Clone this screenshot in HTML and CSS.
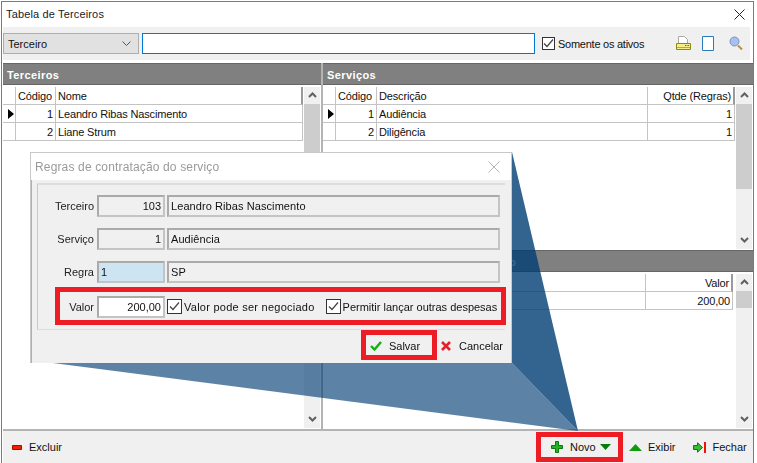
FILE: index.html
```html
<!DOCTYPE html>
<html lang="en">
<head>
    <meta charset="UTF-8">
    <title>Tabela de Terceiros</title>
    <link rel="stylesheet" href="styles.css">
</head>
<body>
    <div class="window">
        <div class="titlebar">
            <span>Tabela de Terceiros</span>
            <svg class="close" width="11" height="11" viewBox="0 0 11 11"><path d="M.5.5l10 10M10.500.5l-10 10" stroke="#222" fill="none"/></svg>
        </div>
        <div class="toolbar">
            <div class="select">
                <span>Terceiro</span>
                <svg width="9" height="5" viewBox="0 0 9 5"><path d="M.5.5l4 4 4-4" stroke="#555" fill="none"/></svg>
            </div>
            <div class="search"></div>
            <label class="check toolbar-check"><span class="box"><svg width="11" height="9" viewBox="0 0 11 9"><path d="M1 4.500l3 3 6-7" stroke="#444" stroke-width="1.200" fill="none"/></svg></span>Somente os ativos</label>
            <svg class="tool-print" width="15" height="15" viewBox="0 0 15 15"><path d="M2.500.5h6l3 3v5h-9z" fill="#fff" stroke="#a9a9a0"/><path d="M.5 7.500h14v6H.5z" fill="#f5ec8a" stroke="#8a8a10"/><path d="M1 11.500h13" stroke="#b0b030"/><path d="M9 9.500h1.500M11.500 9.500H13" stroke="#d33"/></svg>
            <svg class="tool-doc" width="12" height="15" viewBox="0 0 12 15"><path d="M.5.5h11v14H.5z" fill="#fff" stroke="#2b7bb9"/></svg>
            <svg class="tool-find" width="14" height="15" viewBox="0 0 14 15"><circle cx="5.500" cy="5.500" r="4.500" fill="#a9bff0" stroke="#7d8fc4"/><path d="M9 9.500l4 4" stroke="#b8923a" stroke-width="2"/></svg>
        </div>

        <div class="panels">
            <section class="panel panel-left">
                <h2 class="panel-head">Terceiros</h2>
                <div class="grid-wrap grow">
                    <div class="grid">
                        <div class="row row-head cols-a">
                            <div class="cell"></div><div class="cell">Código</div><div class="cell head-last">Nome</div>
                        </div>
                        <div class="row cols-a">
                            <div class="cell mark"><i></i></div><div class="cell num">1</div><div class="cell">Leandro Ribas Nascimento</div>
                        </div>
                        <div class="row cols-a">
                            <div class="cell mark"></div><div class="cell num">2</div><div class="cell">Liane Strum</div>
                        </div>
                    </div>
                    <div class="scroll">
                        <svg class="arrow" width="9" height="6" viewBox="0 0 9 6"><path d="M1 5l3.500-3.500L8 5" stroke="#606060" stroke-width="2" fill="none"/></svg>
                        <div class="thumb thumb-left"></div>
                        <svg class="arrow" width="9" height="6" viewBox="0 0 9 6"><path d="M1 1l3.500 3.500L8 1" stroke="#606060" stroke-width="2" fill="none"/></svg>
                    </div>
                </div>
            </section>

            <section class="panel panel-right">
                <h2 class="panel-head">Serviços</h2>
                <div class="grid-wrap services">
                    <div class="grid">
                        <div class="row row-head cols-b">
                            <div class="cell"></div><div class="cell">Código</div><div class="cell">Descrição</div><div class="cell num head-last">Qtde (Regras)</div>
                        </div>
                        <div class="row cols-b">
                            <div class="cell mark"><i></i></div><div class="cell num">1</div><div class="cell">Audiência</div><div class="cell num">1</div>
                        </div>
                        <div class="row cols-b">
                            <div class="cell mark"></div><div class="cell num">2</div><div class="cell">Diligência</div><div class="cell num">1</div>
                        </div>
                    </div>
                    <div class="scroll">
                        <svg class="arrow" width="9" height="6" viewBox="0 0 9 6"><path d="M1 5l3.500-3.500L8 5" stroke="#606060" stroke-width="2" fill="none"/></svg>
                        <div class="thumb thumb-services"></div>
                        <svg class="arrow" width="9" height="6" viewBox="0 0 9 6"><path d="M1 1l3.500 3.500L8 1" stroke="#606060" stroke-width="2" fill="none"/></svg>
                    </div>
                </div>
                <h2 class="panel-head">Regras de contratação do serviço</h2>
                <div class="grid-wrap grow">
                    <div class="grid">
                        <div class="row row-head cols-c">
                            <div class="cell"></div><div class="cell num head-last">Valor</div>
                        </div>
                        <div class="row cols-c">
                            <div class="cell"></div><div class="cell num">200,00</div>
                        </div>
                    </div>
                    <div class="scroll">
                        <svg class="arrow" width="9" height="6" viewBox="0 0 9 6"><path d="M1 5l3.500-3.500L8 5" stroke="#606060" stroke-width="2" fill="none"/></svg>
                        <div class="thumb thumb-rules"></div>
                        <svg class="arrow" width="9" height="6" viewBox="0 0 9 6"><path d="M1 1l3.500 3.500L8 1" stroke="#606060" stroke-width="2" fill="none"/></svg>
                    </div>
                </div>
            </section>
        </div>

        <div class="footer">
            <div class="btn btn-excluir">
                <svg width="10" height="5" viewBox="0 0 10 5"><path d="M.5.5h9v4h-9z" fill="#f02000" stroke="#a01000"/></svg>
                Excluir
            </div>
            <div class="btn btn-novo">
                <svg width="12" height="12" viewBox="0 0 12 12"><path d="M4.500.5h3v4h4v3h-4v4h-3v-4h-4v-3h4z" fill="#1eb51e" stroke="#0b7a0b"/></svg>
                <span>Novo</span>
                <svg width="11" height="6" viewBox="0 0 11 6"><path d="M0 0h11L5.500 6z" fill="#0a7a0a"/></svg>
            </div>
            <div class="btn btn-exibir">
                <svg width="13" height="7" viewBox="0 0 13 7"><path d="M0 7h13L6.500 0z" fill="#0e9c0e"/></svg>
                Exibir
            </div>
            <div class="btn btn-fechar">
                <svg width="13" height="11" viewBox="0 0 13 11"><path d="M.5 3.500h4V.8l5 4.700-5 4.700V7.500h-4z" fill="#33c033" stroke="#0b7a0b"/><path d="M12 0v11" stroke="#f01010" stroke-width="2"/></svg>
                Fechar
            </div>
        </div>
    </div>

    <!-- callout from the dialog down to the Novo button -->
    <svg class="callout" width="757" height="463" viewBox="0 0 757 463">
        <polygon points="512,152 578,431 512,363" fill="rgba(0,61,115,.8)"/>
        <polygon points="53,363 578,431 512,363" fill="rgba(0,61,115,.64)"/>
    </svg>

    <div class="dialog">
        <div class="dialog-title">
            <span>Regras de contratação do serviço</span>
            <svg width="12" height="12" viewBox="0 0 12 12"><path d="M.5.5l11 11M11.500.5l-11 11" stroke="#b5b5b5" fill="none"/></svg>
        </div>
        <div class="dialog-body">
            <div class="form">
                <div class="form-row">
                    <span class="form-label">Terceiro</span>
                    <div class="field field-code">103</div>
                    <div class="field field-text">Leandro Ribas Nascimento</div>
                </div>
                <div class="form-row">
                    <span class="form-label">Serviço</span>
                    <div class="field field-code">1</div>
                    <div class="field field-text">Audiência</div>
                </div>
                <div class="form-row">
                    <span class="form-label">Regra</span>
                    <div class="field field-rule">1</div>
                    <div class="field field-text">SP</div>
                </div>
                <div class="form-row value-row">
                    <span class="form-label">Valor</span>
                    <div class="field field-code field-value">200,00</div>
                    <label class="check check-neg"><span class="box"><svg width="11" height="9" viewBox="0 0 11 9"><path d="M1 4.500l3 3 6-7" stroke="#444" stroke-width="1.200" fill="none"/></svg></span>Valor pode ser negociado</label>
                    <label class="check check-desp"><span class="box"><svg width="11" height="9" viewBox="0 0 11 9"><path d="M1 4.500l3 3 6-7" stroke="#444" stroke-width="1.200" fill="none"/></svg></span>Permitir lançar outras despesas</label>
                </div>
            </div>
            <div class="dialog-actions">
                <div class="btn btn-salvar">
                    <svg width="12" height="10" viewBox="0 0 12 10"><path d="M1 5l3.500 3.500L11 1" stroke="#10b010" stroke-width="2.400" fill="none"/></svg>
                    Salvar
                </div>
                <div class="btn btn-cancelar">
                    <svg width="10" height="10" viewBox="0 0 10 10"><path d="M1 1l8 8M9 1l-8 8" stroke="#e8202a" stroke-width="2.600" fill="none"/></svg>
                    Cancelar
                </div>
            </div>
        </div>
    </div>
</body>
</html>
```

FILE: styles.css
```css
* {
    box-sizing: border-box;
}

body {
    margin: 0;
    width: 757px;
    height: 463px;
    overflow: hidden;
    position: relative;
    background-color: #fff;
    font-family: "Liberation Sans", Arial, sans-serif;
    font-size: 11px;
    color: #111;
}

.window {
    margin: 1px 0 0 1px;
    width: 753px;
    height: 462px;
    border-top: 1px solid #7a7a7a;
    border-left: 1px solid #7a7a7a;
    border-right: 1px solid #7a7a7a;
    background-color: #fff;
    display: flex;
    flex-direction: column;
}

.titlebar {
    height: 25px;
    flex: none;
    display: flex;
    align-items: center;
    justify-content: space-between;
    padding: 0 6px 1px 4px;
    letter-spacing: .15px;
    color: #1a1a2a;
}

.close {
    margin-right: 2px;
}

.toolbar {
    height: 33px;
    width: 747px;
    margin-left: 1px;
    flex: none;
    display: flex;
    align-items: center;
    background-color: #f0f0f0;
}

.select {
    width: 136px;
    height: 21px;
    display: flex;
    align-items: center;
    justify-content: space-between;
    padding: 0 7px 0 4px;
    background-color: #e1e1e1;
    border: 1px solid #adadad;
}

.search {
    width: 393px;
    height: 21px;
    margin-left: 3px;
    background-color: #fff;
    border: 1px solid #0078d7;
}

.check {
    display: flex;
    align-items: center;
    white-space: nowrap;
}

.box {
    width: 13px;
    height: 13px;
    flex: none;
    margin-right: 3px;
    border: 1px solid #333;
    background-color: #fff;
    display: flex;
    align-items: center;
    justify-content: center;
}

.toolbar-check {
    margin-left: 7px;
    letter-spacing: -.25px;
}

.tool-print {
    margin-left: 32px;
}

.tool-doc {
    margin-left: 11px;
}

.tool-find {
    margin-left: 15px;
}

.panels {
    flex: 1;
    min-height: 0;
    margin-top: 3px;
    display: flex;
}

.panel {
    display: flex;
    flex-direction: column;
}

.panel-left {
    width: 320px;
    flex: none;
    margin-left: 1px;
    border-right: 2px solid #b4b4b4;
}

.panel-right {
    flex: 1;
}

.panel-head {
    margin: 0 0 2px;
    height: 22px;
    flex: none;
    padding: 5px 0 0 4px;
    font-size: 11px;
    font-weight: bold;
    letter-spacing: .4px;
    color: #fff;
    background-color: #808080;
    border-top: 1px solid #666;
    border-bottom: 1px solid #666;
}

.grid-wrap {
    display: flex;
    min-height: 0;
    justify-content: space-between;
    padding-right: 1px;
}

.grow {
    flex: 1;
}

.services {
    height: 163px;
    flex: none;
}

.grid {
    flex: none;
}

.row {
    display: grid;
    height: 18px;
}

.cols-a {
    grid-template-columns: 13px 40px 247px;
}

.cols-b {
    grid-template-columns: 13px 41px 271px 87px;
}

.cols-c {
    grid-template-columns: 323px 87px;
}

.cell {
    padding: 1px 2px 0;
    line-height: 16px;
    letter-spacing: -.15px;
    white-space: nowrap;
    overflow: hidden;
    border-right: 1px solid #c4c4c4;
    border-bottom: 1px solid #c4c4c4;
}

.head-last {
    border-right: 2px solid #9a9a9a;
}

.num {
    text-align: right;
}

.mark {
    display: flex;
    align-items: center;
    padding: 0 0 0 5px;
}

.mark i {
    border-left: 6px solid #000;
    border-top: 5px solid transparent;
    border-bottom: 5px solid transparent;
}

.scroll {
    width: 16px;
    flex: none;
    display: flex;
    flex-direction: column;
    align-items: center;
    background-color: #f0f0f0;
    margin-bottom: 1px;
}

.arrow {
    flex: none;
    margin: 5px 0 6px;
}

.scroll .arrow:last-child {
    margin: auto 0 6px;
}

.thumb {
    width: 100%;
    background-color: #cdcdcd;
    flex: none;
}

.thumb-left {
    height: 190px;
}

.thumb-services {
    height: 85px;
}

.thumb-rules {
    height: 17px;
}

.footer {
    height: 34px;
    flex: none;
    display: flex;
    align-items: center;
    background-color: #f0f0f0;
    border-top: 2px solid #b4b4b4;
    margin-left: 1px;
}

.btn {
    display: flex;
    align-items: center;
    white-space: nowrap;
}

.btn-excluir {
    margin-left: 9px;
    gap: 7px;
}

.btn-novo {
    margin-left: 474px;
    width: 87px;
    height: 30px;
    border: 5px solid #ee1c25;
    padding-left: 10px;
}

.btn-novo span {
    margin: 0 4px 0 7px;
}

.btn-exibir {
    margin-left: 6px;
    gap: 6px;
}

.btn-fechar {
    margin-left: 17px;
    gap: 7px;
}

.callout {
    position: absolute;
    left: 0;
    top: 0;
    pointer-events: none;
}

.dialog {
    position: absolute;
    left: 30px;
    top: 152px;
    width: 482px;
    height: 211px;
    background-color: #fff;
    border: 1px solid #c8c8c8;
    border-bottom: none;
    display: flex;
    flex-direction: column;
    filter: blur(.3px);
}

.dialog-title {
    height: 27px;
    flex: none;
    display: flex;
    align-items: center;
    justify-content: space-between;
    padding: 0 11px 0 4px;
    color: #9a9a9a;
    font-size: 12px;
    letter-spacing: .15px;
}

.dialog-body {
    flex: 1;
    background-color: #f0f0f0;
    padding: 3px 6px 0 5px;
    border-left: 1px solid #b0b0b0;
}

.form {
    height: 147px;
    border-top: 2px solid #ddd;
    border-left: 1px solid #c8c8c8;
    border-bottom: 1px solid #ddd;
    padding: 10px 0 0 0;
}

.form-row {
    display: flex;
    align-items: center;
    height: 22px;
    margin-bottom: 11px;
}

.form-label {
    width: 56px;
    flex: none;
    text-align: right;
    margin-right: 3px;
    color: #222;
}

.field {
    height: 22px;
    line-height: 18px;
    border: 2px solid #aaa;
    border-right-color: #c4c4c4;
    border-bottom-color: #c4c4c4;
    padding: 0 2px;
    white-space: nowrap;
}

.field-code {
    width: 68px;
    margin-right: 2px;
    text-align: right;
}

.field-rule {
    width: 68px;
    margin-right: 2px;
    background-color: #cde4f2;
}

.field-text {
    width: 333px;
    letter-spacing: .08px;
}

.value-row {
    margin: -7px 0 0 17px;
    width: 451px;
    height: 38px;
    padding-top: 1px;
    border: 5px solid #ee1c25;
}

.value-row .form-label {
    width: 34px;
}

.field-value {
    background-color: #fff;
}

.dialog .box {
    width: 15px;
    height: 15px;
    margin-right: 2px;
}

.check-neg {
    letter-spacing: .25px;
}

.check-desp {
    margin-left: 11px;
}

.dialog-actions {
    display: flex;
    align-items: center;
    justify-content: flex-end;
    margin-right: 2px;
}

.btn-salvar {
    width: 76px;
    height: 30px;
    border: 5px solid #ee1c25;
    padding: 1px 0 0 4px;
    gap: 7px;
}

.btn-cancelar {
    margin: 2px 0 0 4px;
    gap: 8px;
}
```
